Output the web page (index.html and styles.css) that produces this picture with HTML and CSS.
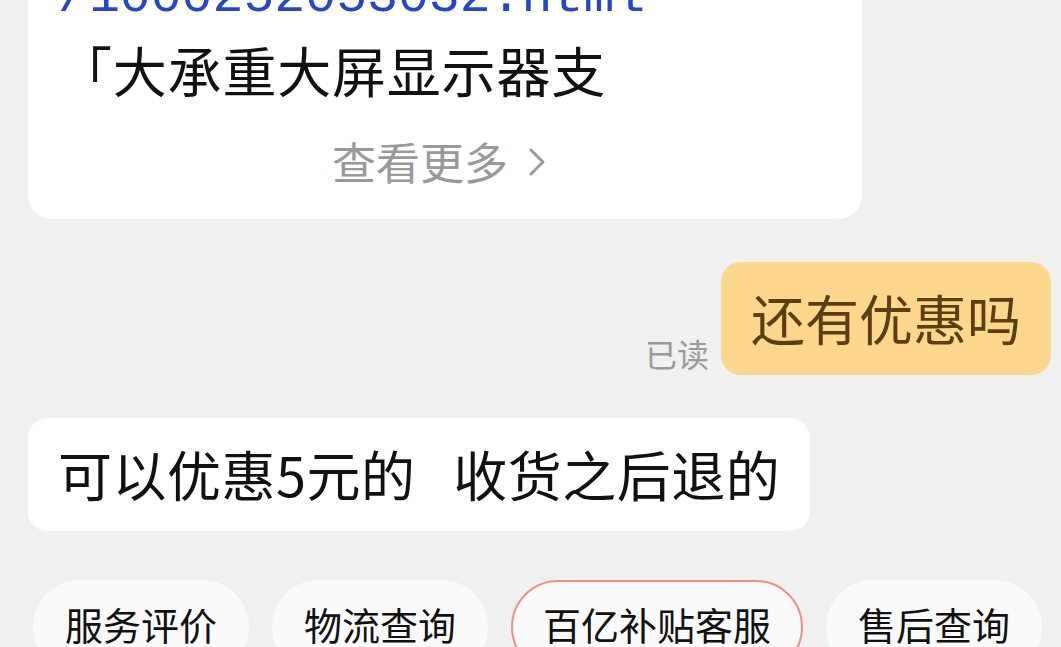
FILE: index.html
```html
<!DOCTYPE html>
<html lang="zh-CN">
<head>
    <meta charset="UTF-8">
    <meta name="viewport" content="width=device-width, initial-scale=1.0">
    <title>聊天</title>
    <link rel="stylesheet" href="styles.css">
</head>
<body>
    <div class="chat">
        <div class="card">
            <div class="card-link">/1000252053032.html</div>
            <div class="card-title">「大承重大屏显示器支</div>
            <div class="card-more">
                <span>查看更多</span>
                <svg class="chevron" width="18" height="30" viewBox="0 0 18 30">
                    <polyline points="3,3 15,15 3,27" fill="none" stroke="#9b9b9b" stroke-width="3" stroke-linecap="round" stroke-linejoin="round"/>
                </svg>
            </div>
        </div>

        <div class="msg-row mine">
            <span class="read">已读</span>
            <div class="bubble bubble-mine">还有优惠吗</div>
        </div>

        <div class="msg-row">
            <div class="bubble bubble-wide">可以优惠5元的   收货之后退的</div>
        </div>

        <div class="quick">
            <button class="chip">服务评价</button>
            <button class="chip">物流查询</button>
            <button class="chip chip-hot">百亿补贴客服</button>
            <button class="chip">售后查询</button>
        </div>
    </div>
</body>
</html>
```

FILE: styles.css
```css
body {
    margin: 0;
    background: #f0f0f0;
    font-family: "Noto Sans CJK SC", "Noto Sans", sans-serif;
    overflow: hidden;
}

.chat {
    display: flex;
    flex-direction: column;
    padding: 0 10px 0 28px;
}

.card {
    width: 834px;
    box-sizing: border-box;
    background: #fff;
    border-radius: 0 0 24px 24px;
    margin-top: -33px;
    padding: 0 30px 28px 30px;
}

.card-link {
    font-family: "Liberation Mono", monospace;
    font-size: 51.5px;
    line-height: 60px;
    color: #2846c2;
    white-space: nowrap;
    overflow: hidden;
}

.card-title {
    margin-top: 5px;
    font-size: 54px;
    line-height: 76px;
    letter-spacing: 0.8px;
    color: #111;
}

.card-more {
    margin-top: 23px;
    padding-right: 12px;
    display: flex;
    justify-content: center;
    align-items: center;
    gap: 20px;
    font-size: 44px;
    line-height: 60px;
    color: #999;
}

.chevron {
    margin-top: 2px;
}

.msg-row {
    display: flex;
    align-items: flex-end;
    margin-top: 43px;
}

.msg-row.mine {
    justify-content: flex-end;
}

.read {
    font-size: 32px;
    line-height: 40px;
    color: #999;
    margin: 0 12px 2px 0;
}

.bubble {
    background: #fff;
    border-radius: 20px;
    padding: 18px 30px 19px 30px;
    font-size: 54px;
    line-height: 76px;
    color: #111;
    white-space: pre;
}

.bubble-wide {
    letter-spacing: 0.5px;
}

.bubble-mine {
    background: #fdd78d;
    color: #5b3f12;
}

.quick {
    display: flex;
    gap: 23px;
    margin-top: 49px;
    margin-left: 5px;
    margin-right: -40px;
}

.chip {
    flex: none;
    height: 94px;
    padding: 0 30px 8px 30px;
    border: 2px solid transparent;
    border-radius: 47px;
    background: #fafafa;
    font-family: "Noto Sans CJK SC", "Noto Sans", sans-serif;
    font-size: 38px;
    color: #111;
}

.chip-hot {
    border-color: #e8918b;
}
```
